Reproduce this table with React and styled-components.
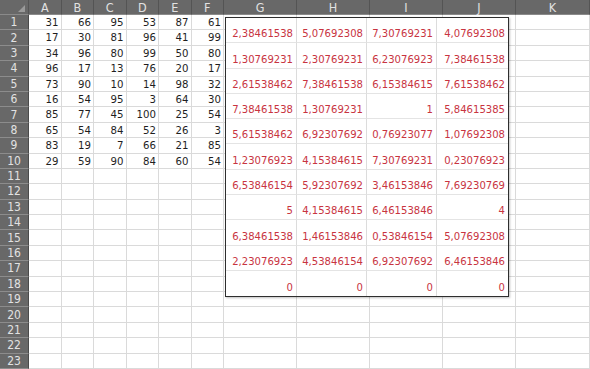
import React from 'react';
import styled, { createGlobalStyle } from 'styled-components';

const GlobalStyle = createGlobalStyle`
    html, body {
        margin: 0;
        padding: 0;
        background: #ffffff;
        overflow: hidden;
    }
`;

const FONT = `"DejaVu Sans Condensed", "Liberation Sans", Arial, sans-serif`;

const COLUMNS = ['A', 'B', 'C', 'D', 'E', 'F', 'G', 'H', 'I', 'J', 'K'];
const ROW_COUNT = 23;

const DATA = [
    [31, 66, 95, 53, 87, 61],
    [17, 30, 81, 96, 41, 99],
    [34, 96, 80, 99, 50, 80],
    [96, 17, 13, 76, 20, 17],
    [73, 90, 10, 14, 98, 32],
    [16, 54, 95, 3, 64, 30],
    [85, 77, 45, 100, 25, 54],
    [65, 54, 84, 52, 26, 3],
    [83, 19, 7, 66, 21, 85],
    [29, 59, 90, 84, 60, 54],
];

const RESULTS = [
    ['2,38461538', '5,07692308', '7,30769231', '4,07692308'],
    ['1,30769231', '2,30769231', '6,23076923', '7,38461538'],
    ['2,61538462', '7,38461538', '6,15384615', '7,61538462'],
    ['7,38461538', '1,30769231', '1', '5,84615385'],
    ['5,61538462', '6,92307692', '0,76923077', '1,07692308'],
    ['1,23076923', '4,15384615', '7,30769231', '0,23076923'],
    ['6,53846154', '5,92307692', '3,46153846', '7,69230769'],
    ['5', '4,15384615', '6,46153846', '4'],
    ['6,38461538', '1,46153846', '0,53846154', '5,07692308'],
    ['2,23076923', '4,53846154', '6,92307692', '6,46153846'],
    ['0', '0', '0', '0'],
];

const Workbook = styled.div`
    position: relative;
    width: 590px;
    height: 369px;
    overflow: hidden;
    font-family: ${FONT};
`;

const Sheet = styled.div`
    display: grid;
    grid-template-columns: 29px repeat(6, 32.5px) repeat(4, 73px) 1fr;
    grid-template-rows: 15px;
    grid-auto-rows: 15.4px;
`;

const Corner = styled.div`
    display: flex;
    align-items: flex-end;
    justify-content: flex-end;
    padding: 0 3px 2px 0;
    background: #686868;
    border-right: 1px solid #555555;
    border-bottom: 1px solid #8a8a8a;
`;

const ColumnHeader = styled.div`
    display: flex;
    align-items: center;
    justify-content: center;
    background: #686868;
    color: #e2e2e2;
    font-size: 12.5px;
    border-right: 1px solid #545454;
    border-bottom: 1px solid #8a8a8a;
`;

const RowHeader = styled.div`
    display: flex;
    align-items: center;
    justify-content: center;
    background: #686868;
    color: #e2e2e2;
    font-size: 12px;
    line-height: 1;
    border-bottom: 1px solid #8c8c8c;
    border-right: 1px solid #4a4a4a;
`;

const Cell = styled.div`
    display: flex;
    align-items: center;
    justify-content: flex-end;
    padding: 1px 2px 0 0;
    color: #1e1e1e;
    font-size: 11.3px;
    line-height: 1;
    border-right: 1px solid #dadada;
    border-bottom: 1px solid #dadada;
    overflow: hidden;
    white-space: nowrap;
`;

const PastedTable = styled.div`
    position: absolute;
    left: 225px;
    top: 17px;
    display: grid;
    grid-template-columns: 71px 70px 70px 71px;
    grid-auto-rows: 25.3px;
    background: #ffffff;
    border: 1.5px solid #2e2e2e;
    box-shadow: 1px 1px 2px rgba(0, 0, 0, 0.25);
`;

const ResultCell = styled.div`
    display: flex;
    align-items: flex-end;
    justify-content: flex-end;
    padding: 0 3px 2px 0;
    color: #c8343f;
    font-size: 11.2px;
    line-height: 12px;
    white-space: nowrap;
    border-right: ${({ $last }) => ($last ? 'none' : '1px solid #dcdcdc')};
    border-bottom: ${({ $bottom }) => ($bottom ? 'none' : '1px solid #e4e4e4')};
`;

const CornerMark = () => (
    <svg width="7" height="7" viewBox="0 0 7 7">
        <polygon points="7,0 7,7 0,7" fill="#9a9a9a" />
    </svg>
);

export default function App() {
    const rows = Array.from({ length: ROW_COUNT }, (_, i) => i);

    return (
        <>
            <GlobalStyle />
            <Workbook>
                <Sheet>
                    <Corner>
                        <CornerMark />
                    </Corner>
                    {COLUMNS.map(col => (
                        <ColumnHeader key={col}>{col}</ColumnHeader>
                    ))}
                    {rows.map(r => (
                        <React.Fragment key={r}>
                            <RowHeader>{r + 1}</RowHeader>
                            {COLUMNS.map((col, c) => (
                                <Cell key={col}>
                                    {DATA[r] && DATA[r][c] !== undefined
                                        ? DATA[r][c]
                                        : ''}
                                </Cell>
                            ))}
                        </React.Fragment>
                    ))}
                </Sheet>
                <PastedTable>
                    {RESULTS.map((row, r) =>
                        row.map((value, c) => (
                            <ResultCell
                                key={`${r}-${c}`}
                                $last={c === row.length - 1}
                                $bottom={r === RESULTS.length - 1}
                            >
                                {value}
                            </ResultCell>
                        ))
                    )}
                </PastedTable>
            </Workbook>
        </>
    );
}
